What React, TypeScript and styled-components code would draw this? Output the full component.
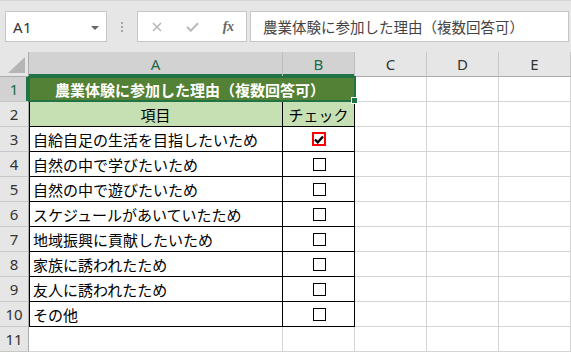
import React from "react";
import styled, { createGlobalStyle, css } from "styled-components";

const Global = createGlobalStyle`
  html, body { margin: 0; padding: 0; background: #ffffff; }
  body {
    width: 571px; height: 352px; overflow: hidden;
    font-family: "Noto Sans", "Noto Sans CJK JP", sans-serif;
  }
`;

const JP = `"Noto Sans CJK JP", "Noto Sans", sans-serif`;
const GREEN = "#217346";

const Page = styled.div`
  display: flex;
  flex-direction: column;
  width: 571px;
  height: 352px;
  overflow: hidden;
  background: #e6e6e6;
`;

const Toolbar = styled.div`
  height: 52px;
  box-sizing: border-box;
  border-top: 1px solid #d4d4d4;
  padding: 10px 0 0 5px;
  display: flex;
  align-items: flex-start;
  flex-shrink: 0;
`;

const Box = styled.div`
  height: 31px;
  box-sizing: border-box;
  border: 1px solid #c6c6c6;
  background: #ffffff;
  display: flex;
  align-items: center;
`;

const NameBox = styled(Box)`
  width: 102px;
  padding: 0 7px 0 7px;
  justify-content: space-between;
`;

const NameText = styled.span`
  font-family: "Noto Sans", sans-serif;
  font-size: 15px;
  color: #333;
  letter-spacing: 0.5px;
`;

const Caret = styled.span`
  width: 0;
  height: 0;
  border-left: 4px solid transparent;
  border-right: 4px solid transparent;
  border-top: 4px solid #666;
  margin-top: 2px;
`;

const Grip = styled.div`
  margin-left: 14px;
  width: 3px;
  height: 31px;
  display: flex;
  flex-direction: column;
  justify-content: center;
  gap: 2px;
`;

const Dot = styled.span`
  width: 2px;
  height: 2px;
  background: #a6a6a6;
`;

const ButtonsBox = styled(Box)`
  margin-left: 13px;
  width: 110px;
  padding-left: 1px;
`;

const IconSlot = styled.span`
  width: 36px;
  height: 29px;
  display: flex;
  align-items: center;
  justify-content: center;
`;

const Fx = styled.span`
  font-family: "Liberation Serif", "DejaVu Serif", serif;
  font-style: italic;
  font-size: 14px;
  font-weight: bold;
  color: #666;
  letter-spacing: -0.5px;
`;

const FormulaBox = styled(Box)`
  margin-left: 3px;
  width: 319px;
  padding-left: 12px;
  font-family: ${JP};
  font-size: 14.5px;
  color: #444;
  white-space: nowrap;
  overflow: hidden;
`;

const Sheet = styled.div`
  display: grid;
  grid-template-columns: 29px 254px 72px 72px 72px 72px;
  grid-template-rows: 25px repeat(11, 25px);
  background: #ffffff;
`;

const Corner = styled.div`
  background: #e6e6e6;
  box-sizing: border-box;
  border-right: 1px solid #ababab;
  border-bottom: 1px solid #ababab;
  display: flex;
  align-items: flex-end;
  justify-content: flex-end;
  padding: 0 3px 3px 0;
`;

const CornerTri = styled.span`
  width: 0;
  height: 0;
  border-left: 17px solid transparent;
  border-bottom: 16px solid #b5b5b5;
`;

const ColHeader = styled.div<{ $sel?: boolean }>`
  box-sizing: border-box;
  background: ${(p) => (p.$sel ? "#d2d2d2" : "#e6e6e6")};
  border-right: 1px solid ${(p) => (p.$sel ? "#bdbdbd" : "#c8c8c8")};
  border-bottom: 1px solid #ababab;
  display: flex;
  align-items: center;
  justify-content: center;
  font-family: "Noto Sans", sans-serif;
  font-size: 15px;
  color: ${(p) => (p.$sel ? "#1d6b47" : "#333")};
  padding-bottom: 1px;
  ${(p) =>
    p.$sel &&
    css`
      box-shadow: inset 0 -2px 0 ${GREEN};
    `}
`;

const RowHeader = styled.div<{ $sel?: boolean }>`
  box-sizing: border-box;
  background: ${(p) => (p.$sel ? "#d2d2d2" : "#e6e6e6")};
  border-right: 1px solid #ababab;
  border-bottom: 1px solid #c8c8c8;
  display: flex;
  align-items: center;
  justify-content: center;
  font-family: "Noto Sans", sans-serif;
  font-size: 15px;
  color: ${(p) => (p.$sel ? "#1d6b47" : "#333")};
  ${(p) =>
    p.$sel &&
    css`
      box-shadow: inset -2px 0 0 ${GREEN};
    `}
`;

const Cell = styled.div<{ $black?: boolean; $bg?: string; $center?: boolean; $leftEdge?: boolean }>`
  box-sizing: border-box;
  background: ${(p) => p.$bg || "#ffffff"};
  border-right: 1px solid ${(p) => (p.$black ? "#000" : "#d4d4d4")};
  border-bottom: 1px solid ${(p) => (p.$black ? "#000" : "#d4d4d4")};
  display: flex;
  align-items: center;
  justify-content: ${(p) => (p.$center ? "center" : "flex-start")};
  padding-left: ${(p) => (p.$center ? "0" : "4px")};
  font-family: ${JP};
  font-size: 15px;
  color: #000;
  white-space: nowrap;
  overflow: visible;
  ${(p) =>
    p.$leftEdge &&
    css`
      box-shadow: inset 1px 0 0 #000;
    `}
`;

const TitleCell = styled.div`
  grid-column: 2 / 4;
  position: relative;
  box-sizing: border-box;
  background: #538135;
  border-bottom: 1px solid #000;
  display: flex;
  align-items: center;
  justify-content: center;
  padding-right: 4px;
  font-family: ${JP};
  font-size: 15px;
  font-weight: bold;
  color: #ffffff;
  white-space: nowrap;
`;

const SelectionFrame = styled.div`
  position: absolute;
  top: -1px;
  left: -1px;
  right: -1px;
  bottom: -1px;
  border: 2px solid ${GREEN};
  pointer-events: none;
`;

const Handle = styled.span`
  position: absolute;
  right: -4px;
  bottom: -4px;
  width: 5px;
  height: 5px;
  background: ${GREEN};
  border: 1px solid #ffffff;
`;

const CheckBox = styled.span<{ $checked?: boolean }>`
  box-sizing: border-box;
  width: ${(p) => (p.$checked ? "14px" : "13px")};
  height: ${(p) => (p.$checked ? "14px" : "13px")};
  border: ${(p) => (p.$checked ? "2px solid #ff0000" : "1px solid #000")};
  display: flex;
  align-items: center;
  justify-content: center;
  margin-left: 1px;
`;

const items = [
  "自給自足の生活を目指したいため",
  "自然の中で学びたいため",
  "自然の中で遊びたいため",
  "スケジュールがあいていたため",
  "地域振興に貢献したいため",
  "家族に誘われたため",
  "友人に誘われたため",
  "その他",
];

const cols = ["A", "B", "C", "D", "E"];

const Blank = () => (
  <>
    <Cell />
    <Cell />
    <Cell />
  </>
);

export default function App() {
  return (
    <Page>
      <Global />
      <Toolbar>
        <NameBox>
          <NameText>A1</NameText>
          <Caret />
        </NameBox>
        <Grip>
          <Dot />
          <Dot />
          <Dot />
        </Grip>
        <ButtonsBox>
          <IconSlot>
            <svg width="10" height="10" viewBox="0 0 10 10">
              <path d="M1 1 L9 9 M9 1 L1 9" stroke="#b8b8b8" strokeWidth="1.6" fill="none" />
            </svg>
          </IconSlot>
          <IconSlot>
            <svg width="13" height="10" viewBox="0 0 13 10">
              <path d="M1 5 L4.8 8.6 L12 1.2" stroke="#b8b8b8" strokeWidth="2" fill="none" />
            </svg>
          </IconSlot>
          <IconSlot>
            <Fx>fx</Fx>
          </IconSlot>
        </ButtonsBox>
        <FormulaBox>農業体験に参加した理由（複数回答可）</FormulaBox>
      </Toolbar>
      <Sheet>
        <Corner>
          <CornerTri />
        </Corner>
        {cols.map((c) => (
          <ColHeader key={c} $sel={c === "A" || c === "B"}>
            {c}
          </ColHeader>
        ))}

        <RowHeader $sel>1</RowHeader>
        <TitleCell>
          農業体験に参加した理由（複数回答可）
          <SelectionFrame>
            <Handle />
          </SelectionFrame>
        </TitleCell>
        <Blank />

        <RowHeader>2</RowHeader>
        <Cell $black $center $bg="#c6e0b4" $leftEdge>
          項目
        </Cell>
        <Cell $black $center $bg="#c6e0b4">
          チェック
        </Cell>
        <Blank />

        {items.map((t, i) => (
          <React.Fragment key={t}>
            <RowHeader>{i + 3}</RowHeader>
            <Cell $black $leftEdge>
              {t}
            </Cell>
            <Cell $black $center>
              <CheckBox $checked={i === 0}>
                {i === 0 && (
                  <svg width="10" height="9" viewBox="0 0 10 9">
                    <path d="M1 4.5 L3.8 7.3 L9 1.5" stroke="#000" strokeWidth="2.4" fill="none" />
                  </svg>
                )}
              </CheckBox>
            </Cell>
            <Blank />
          </React.Fragment>
        ))}

        <RowHeader>11</RowHeader>
        <Cell />
        <Cell />
        <Blank />
      </Sheet>
    </Page>
  );
}
